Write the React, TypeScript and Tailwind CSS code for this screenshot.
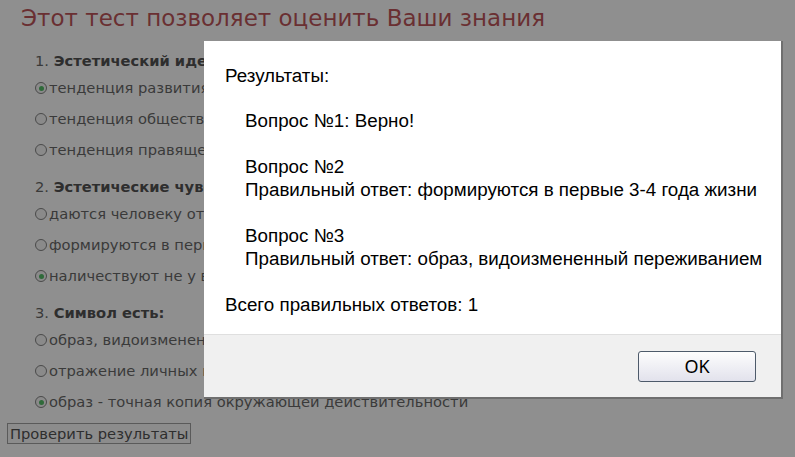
import React from 'react';

type Question = {
  num: string;
  title: string;
  options: { text: string; checked?: boolean }[];
};

const questions: Question[] = [
  {
    num: '1.',
    title: 'Эстетический идеал - это:',
    options: [
      { text: 'тенденция развития эстетического сознания', checked: true },
      { text: 'тенденция общественного вкуса' },
      { text: 'тенденция правящего класса' },
    ],
  },
  {
    num: '2.',
    title: 'Эстетические чувства:',
    options: [
      { text: 'даются человеку от рождения' },
      { text: 'формируются в первые 3-4 года жизни' },
      { text: 'наличествуют не у всех людей', checked: true },
    ],
  },
  {
    num: '3.',
    title: 'Символ есть:',
    options: [
      { text: 'образ, видоизмененный переживанием' },
      { text: 'отражение личных переживаний' },
      { text: 'образ - точная копия окружающей действительности', checked: true },
    ],
  },
];

function Radio({ checked }: { checked?: boolean }) {
  return (
    <span className="mr-[2px] flex h-[12px] w-[12px] shrink-0 items-center justify-center rounded-full border border-[#4a4a4a] bg-[#8a8a8a]">
      {checked && <span className="h-[5px] w-[5px] rounded-full bg-[#2f6a3a]" />}
    </span>
  );
}

export default function App() {
  return (
    <div className="relative h-[457px] w-[795px] overflow-hidden bg-[#8f8f8f] font-['DejaVu_Sans',sans-serif]">
      <div className="pl-[7px] pt-[4px]">
        <h1 className="pl-[14px] text-[23px] leading-[28px] text-[#6a2f32]">
          Этот тест позволяет оценить Ваши знания
        </h1>
        <div className="mt-[20px] pl-[28px] text-[14.7px] text-[#3a3a3a]">
          {questions.map((q, qi) => (
            <div key={q.num} className={qi > 0 ? 'mt-[19px]' : ''}>
              {/* rows behind the dialog are clipped at its left edge */}
              <div className="h-[18px] max-w-[169px] overflow-hidden whitespace-nowrap leading-[18px]">
                {q.num} <b className="text-[#2e2e2e]">{q.title}</b>
              </div>
              <div className="mt-[9px] flex flex-col gap-[13px]">
                {q.options.map((o, oi) => {
                  const last = qi === questions.length - 1 && oi === q.options.length - 1;
                  return (
                    <label
                      key={o.text}
                      className={`flex h-[18px] items-center overflow-hidden whitespace-nowrap leading-[18px] ${last ? '' : 'max-w-[169px]'}`}
                    >
                      <Radio checked={o.checked} />
                      {o.text}
                    </label>
                  );
                })}
              </div>
            </div>
          ))}
        </div>
        <button className="mt-[12px] h-[21px] border border-[#5a5a5a] bg-[#8c8c8c] px-[2px] text-[14.7px] leading-[18px] text-[#2e2e2e]">
          Проверить результаты
        </button>
      </div>

      <div className="absolute left-[204px] top-[41px] flex h-[358px] w-[579px] flex-col border-b-2 border-r-2 border-[#6f6f6f] bg-white font-['Liberation_Sans',Arial,sans-serif] text-[18.8px] leading-[23px] text-black">
        <div className="flex-1 pl-[21px] pt-[23px]">
          <p>Результаты:</p>
          <div className="mt-[22px] pl-[20px]">
            <p>Вопрос №1: Верно!</p>
            <p className="mt-[23px]">Вопрос №2</p>
            <p>Правильный ответ: формируются в первые 3-4 года жизни</p>
            <p className="mt-[23px]">Вопрос №3</p>
            <p>Правильный ответ: образ, видоизмененный переживанием</p>
          </div>
          <p className="mt-[23px]">Всего правильных ответов: 1</p>
        </div>
        <div className="flex h-[63px] items-center justify-end border-t border-[#dfdfdf] bg-[#f0f0f0] pr-[25px]">
          <button className="h-[31px] w-[118px] rounded-[3px] border border-[#4d5a6a] bg-gradient-to-b from-[#fdfdfd] to-[#e2e2ec] font-['Noto_Sans',sans-serif] text-[18px] text-black">
            OK
          </button>
        </div>
      </div>
    </div>
  );
}
